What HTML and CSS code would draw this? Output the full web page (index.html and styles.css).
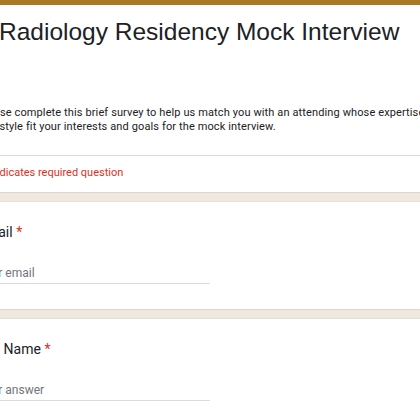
FILE: index.html
```html
<!DOCTYPE html>
<html>
<head>
<meta charset="utf-8">
<link rel="stylesheet" href="styles.css">
</head>
<body>
<div class="page">
  <section class="card header-card">
    <div class="top-bar"></div>
    <div class="header-body">
      <h1 class="title">Radiology Residency Mock Interview</h1>
      <p class="desc">Please complete this brief survey to help us match you with an attending whose expertise and style fit your interests and goals for the mock interview.</p>
    </div>
    <div class="divider"></div>
    <div class="required-note">* Indicates required question</div>
  </section>

  <section class="card question">
    <div class="q-label">Email <span class="star">*</span></div>
    <div class="q-input">Your email</div>
  </section>

  <section class="card question">
    <div class="q-label">Full Name <span class="star">*</span></div>
    <div class="q-input">Your answer</div>
  </section>
</div>
</body>
</html>
```

FILE: styles.css
```css
html, body {
  margin: 0;
  padding: 0;
}
body {
  background: #f0e9e0;
  overflow: hidden;
  width: 420px;
  height: 420px;
}
.page {
  width: 500px;
  margin-left: -22px;
  display: flex;
  flex-direction: column;
  gap: 10px;
}
.card {
  background: #ffffff;
  box-shadow: 0 1px 1px rgba(0,0,0,0.08), 0 -1px 1px rgba(0,0,0,0.04);
}
.top-bar {
  height: 5px;
  background: #a97a22;
}
.header-body {
  padding: 11px 0 0 0;
}
.title {
  margin: 0 0 0 21px;
  font-family: "Liberation Sans", Arial, sans-serif;
  font-weight: 400;
  font-size: 24.5px;
  line-height: 32px;
  color: #202124;
}
.desc {
  margin: 58px 0 0 0;
  width: 460px;
  font-family: Roboto, "Noto Sans", sans-serif;
  font-size: 11px;
  letter-spacing: 0.12px;
  line-height: 14px;
  color: #202124;
}
.divider {
  margin-top: 21px;
  height: 1px;
  background: #dadce0;
}
.required-note {
  padding: 10px 0 12px 5px;
  font-family: Roboto, "Noto Sans", sans-serif;
  font-size: 11px;
  line-height: 14px;
  color: #d93025;
}
.question {
  height: 107px;
  padding-top: 21px;
  box-sizing: border-box;
}
.q-label {
  font-family: Roboto, "Noto Sans", sans-serif;
  font-size: 14px;
  line-height: 18px;
  color: #202124;
}
.star {
  color: #d93025;
}
.q-input {
  margin-top: 24px;
  width: 232px;
  padding-bottom: 2px;
  border-bottom: 1px solid #dadce0;
  font-family: Roboto, "Noto Sans", sans-serif;
  font-size: 12px;
  line-height: 16px;
  color: #70757a;
}
```
